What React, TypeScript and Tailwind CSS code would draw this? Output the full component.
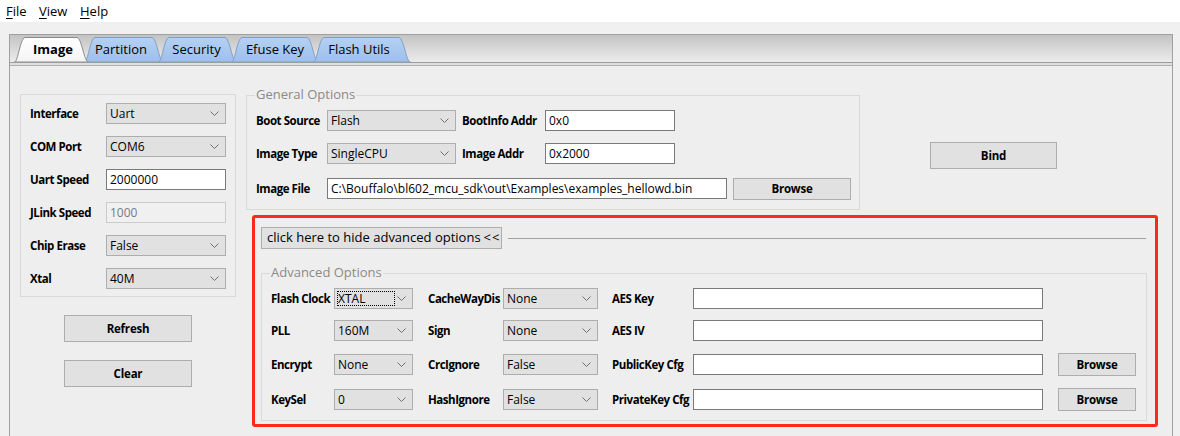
import React from "react";

function Chevron() {
  return (
    <svg width="9" height="5" viewBox="0 0 9 5" className="shrink-0">
      <polyline points="0.5,0.5 4.5,4.5 8.5,0.5" fill="none" stroke="#707070" strokeWidth="1" />
    </svg>
  );
}

function Select({ value, w, focus }: { value: string; w: string; focus?: boolean }) {
  return (
    <div className={`relative flex items-center h-[21px] shrink-0 border border-[#adadad] bg-[#e1e1e1] pl-[3px] pr-[6px] ${w}`}>
      <span className="flex-1 text-[12px] text-black leading-none pt-[1px]">{value}</span>
      <Chevron />
      {focus && <div className="absolute left-[2px] top-[2px] bottom-[2px] w-[58px] border border-dotted border-black" />}
    </div>
  );
}

function Input({ value, w, disabled }: { value?: string; w: string; disabled?: boolean }) {
  return (
    <div
      className={`flex items-center h-[21px] shrink-0 border pl-[3px] text-[12px] leading-none ${w} ${
        disabled ? "border-[#cccccc] bg-[#f0f0f0] text-[#7a7a7a]" : "border-[#7a7a7a] bg-white text-black"
      }`}
    >
      {value}
    </div>
  );
}

function Btn({ label, cls }: { label: string; cls: string }) {
  return (
    <div className={`flex items-center justify-center shrink-0 border border-[#adadad] bg-[#e1e1e1] text-[11.5px] tracking-[-0.2px] font-bold text-black ${cls}`}>
      {label}
    </div>
  );
}

function Label({ text, w }: { text: string; w: string }) {
  return (
    <div className={`shrink-0 text-[11.5px] tracking-[-0.45px] font-bold text-black whitespace-nowrap ${w}`}>{text}</div>
  );
}

function TabSvg({ w, active }: { w: number; active?: boolean }) {
  const H = 25;
  const d = `M0.5,${H} C4,${H} 6,1.5 11,0.5 L${w - 12},0.5 C${w - 7},1.5 ${w - 5},${H} ${w - 0.5},${H} Z`;
  const id = active ? "gw" : "gb";
  return (
    <svg className="absolute left-0 top-0" width={w} height={H} viewBox={`0 0 ${w} ${H}`}>
      <defs>
        <linearGradient id={id} x1="0" y1="0" x2="0" y2="1">
          <stop offset="0" stopColor={active ? "#ffffff" : "#b5d1f3"} />
          <stop offset="1" stopColor={active ? "#f4f4f4" : "#9dbfea"} />
        </linearGradient>
      </defs>
      <path d={d} fill={`url(#${id})`} stroke={active ? "#8a8a8a" : "#7f9fc6"} strokeWidth="1" />
    </svg>
  );
}

function TabItem({ label, w, active, ml, textCls }: { label: string; w: number; active?: boolean; ml: string; textCls: string }) {
  return (
    <div className={`relative h-[25px] shrink-0 ${ml} ${active ? "z-10" : ""}`} style={{ width: w }}>
      <TabSvg w={w} active={active} />
      <div className={`relative flex h-full items-center justify-center text-[13px] text-black pt-[1px] ${active ? "font-bold" : ""} ${textCls}`}>
        {label}
      </div>
    </div>
  );
}

function Group({ title, cls, children }: { title?: string; cls: string; children: React.ReactNode }) {
  return (
    <div className={`relative border border-[#d9d9d9] shrink-0 ${cls}`}>
      {title && (
        <div className="absolute left-[8px] -top-[11px] px-[1px] bg-[#eeeeee] text-[13px] text-[#8a8a8a] leading-[18px]">{title}</div>
      )}
      {children}
    </div>
  );
}

export default function App() {
  return (
    <div className="w-[1180px] h-[436px] overflow-hidden bg-[#f0f0f0] font-['Open_Sans',sans-serif] flex flex-col">
      {/* Menu bar */}
      <div className="h-[22px] bg-white flex items-center text-[13px] text-black shrink-0 pt-[2px]">
        <span className="ml-[6px] w-[33px]">
          <span className="underline underline-offset-2">F</span>ile
        </span>
        <span className="w-[41px]">
          <span className="underline underline-offset-2">V</span>iew
        </span>
        <span>
          <span className="underline underline-offset-2">H</span>elp
        </span>
      </div>
      <div className="h-[12px] shrink-0" />
      {/* Frame */}
      <div className="ml-[9px] w-[1164px] flex-1 flex flex-col border-l border-r border-[#a0a0a0]">
        {/* Tab strip */}
        <div className="h-[28px] shrink-0 border-t border-[#a0a0a0] bg-gradient-to-b from-[#c3c3c3] to-[#ececec] flex items-end pl-[4px]">
          <TabItem label="Image" w={75} active ml="ml-0" textCls="pl-[3px]" />
          <TabItem label="Partition" w={80} ml="-ml-[5px]" textCls="pr-[6px]" />
          <TabItem label="Security" w={79} ml="-ml-[6px]" textCls="pr-[2px]" />
          <TabItem label="Efuse Key" w={88} ml="-ml-[6px]" textCls="" />
          <TabItem label="Flash Utils" w={98} ml="-ml-[6px]" textCls="pr-[6px]" />
        </div>
        <div className="h-[4px] shrink-0 border-t border-[#9c9c9c] border-b border-b-[#b0b0b0] bg-[#dedede]" />
        {/* Content */}
        <div className="flex-1 bg-[#eeeeee] flex pl-[10px] pt-[28px]">
          {/* Left column */}
          <div className="w-[216px] shrink-0 flex flex-col">
            <Group cls="w-[216px] h-[203px] pl-[9px] pt-[8px] flex flex-col">
              <div className="flex items-center h-[21px]">
                <Label text="Interface" w="w-[76px]" />
                <Select value="Uart" w="w-[120px]" />
              </div>
              <div className="flex items-center h-[21px] mt-[12px]">
                <Label text="COM Port" w="w-[76px]" />
                <Select value="COM6" w="w-[120px]" />
              </div>
              <div className="flex items-center h-[21px] mt-[12px]">
                <Label text="Uart Speed" w="w-[76px]" />
                <Input value="2000000" w="w-[120px]" />
              </div>
              <div className="flex items-center h-[21px] mt-[12px]">
                <Label text="JLink Speed" w="w-[76px]" />
                <Input value="1000" w="w-[120px]" disabled />
              </div>
              <div className="flex items-center h-[21px] mt-[12px]">
                <Label text="Chip Erase" w="w-[76px]" />
                <Select value="False" w="w-[120px]" />
              </div>
              <div className="flex items-center h-[21px] mt-[12px]">
                <Label text="Xtal" w="w-[76px]" />
                <Select value="40M" w="w-[120px]" />
              </div>
            </Group>
            <Btn label="Refresh" cls="ml-[44px] mt-[18px] w-[128px] h-[27px]" />
            <Btn label="Clear" cls="ml-[44px] mt-[18px] w-[128px] h-[27px]" />
          </div>
          {/* Right part */}
          <div className="ml-[10px] flex flex-col pt-[1px]">
            <div className="flex items-start">
              <Group title="General Options" cls="w-[614px] h-[115px] pl-[9px] pt-[14px] flex flex-col">
                <div className="flex items-center h-[21px]">
                  <Label text="Boot Source" w="w-[71px]" />
                  <Select value="Flash" w="w-[129px]" />
                  <div className="w-[6px]" />
                  <Label text="BootInfo Addr" w="w-[83px]" />
                  <Input value="0x0" w="w-[130px]" />
                </div>
                <div className="flex items-center h-[21px] mt-[12px]">
                  <Label text="Image Type" w="w-[71px]" />
                  <Select value="SingleCPU" w="w-[129px]" />
                  <div className="w-[6px]" />
                  <Label text="Image Addr" w="w-[83px]" />
                  <Input value="0x2000" w="w-[130px]" />
                </div>
                <div className="flex items-center h-[21px] mt-[14px]">
                  <Label text="Image File" w="w-[71px]" />
                  <Input value="C:\Bouffalo\bl602_mcu_sdk\out\Examples\examples_hellowd.bin" w="w-[400px]" />
                  <Btn label="Browse" cls="ml-[6px] w-[118px] h-[22px]" />
                </div>
              </Group>
              <Btn label="Bind" cls="ml-[70px] mt-[47px] w-[127px] h-[27px]" />
            </div>
            {/* Red highlight */}
            <div className="mt-[5px] ml-[6px] w-[906px] h-[212px] border-[3px] border-[#fb2a1c] rounded-[3px] flex flex-col">
              <div className="flex items-center mt-[9px] ml-[6px] mr-[9px]">
                <div className="w-[241px] h-[22px] shrink-0 border border-[#adadad] bg-[#e1e1e1] flex items-center pl-[5px] text-[13px] text-black whitespace-nowrap">
                  click here to hide advanced options <span className="ml-[3px] tracking-[1px]">&lt;&lt;</span>
                </div>
                <div className="flex-1 ml-[6px] h-px bg-[#a0a0a0]" />
              </div>
              <Group title="Advanced Options" cls="mt-[24px] ml-[6px] w-[886px] h-[148px] pl-[9px] pt-[14px] flex flex-col">
                <div className="flex items-center h-[21px]">
                  <Label text="Flash Clock" w="w-[63px]" />
                  <Select value="XTAL" w="w-[79px]" focus />
                  <div className="w-[15px]" />
                  <Label text="CacheWayDis" w="w-[75px]" />
                  <Select value="None" w="w-[95px]" />
                  <div className="w-[14px]" />
                  <Label text="AES Key" w="w-[81px]" />
                  <Input w="w-[350px]" />
                </div>
                <div className="flex items-center h-[21px] mt-[11px]">
                  <Label text="PLL" w="w-[63px]" />
                  <Select value="160M" w="w-[79px]" />
                  <div className="w-[15px]" />
                  <Label text="Sign" w="w-[75px]" />
                  <Select value="None" w="w-[95px]" />
                  <div className="w-[14px]" />
                  <Label text="AES IV" w="w-[81px]" />
                  <Input w="w-[350px]" />
                </div>
                <div className="flex items-center h-[21px] mt-[13px]">
                  <Label text="Encrypt" w="w-[63px]" />
                  <Select value="None" w="w-[79px]" />
                  <div className="w-[15px]" />
                  <Label text="CrcIgnore" w="w-[75px]" />
                  <Select value="False" w="w-[95px]" />
                  <div className="w-[14px]" />
                  <Label text="PublicKey Cfg" w="w-[81px]" />
                  <Input w="w-[350px]" />
                  <Btn label="Browse" cls="ml-[15px] w-[78px] h-[23px]" />
                </div>
                <div className="flex items-center h-[21px] mt-[14px]">
                  <Label text="KeySel" w="w-[63px]" />
                  <Select value="0" w="w-[79px]" />
                  <div className="w-[15px]" />
                  <Label text="HashIgnore" w="w-[75px]" />
                  <Select value="False" w="w-[95px]" />
                  <div className="w-[14px]" />
                  <Label text="PrivateKey Cfg" w="w-[81px]" />
                  <Input w="w-[350px]" />
                  <Btn label="Browse" cls="ml-[15px] w-[78px] h-[23px]" />
                </div>
              </Group>
            </div>
          </div>
        </div>
      </div>
    </div>
  );
}
